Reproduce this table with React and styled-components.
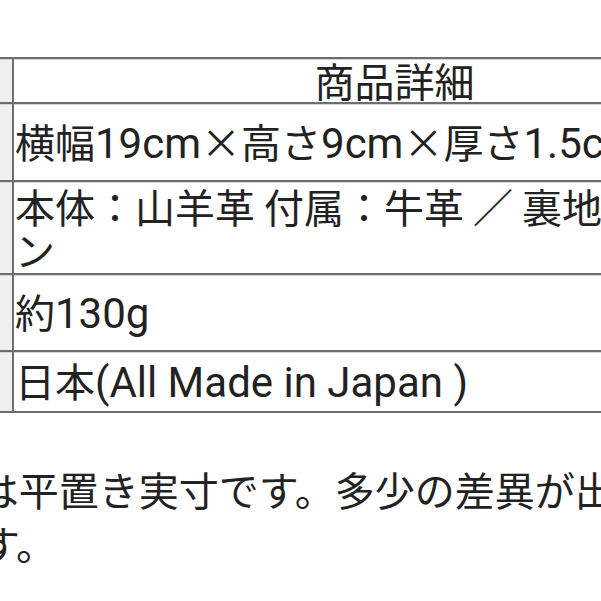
import React from 'react';
import styled, { createGlobalStyle } from 'styled-components';

const GlobalStyle = createGlobalStyle`
  html, body {
    margin: 0;
    padding: 0;
    background: #ffffff;
    overflow: hidden;
  }

  body {
    font-family: "Noto Sans CJK JP", sans-serif;
    color: #222222;
  }
`;

const Page = styled.div`
  padding-top: 57px;
  width: 601px;
`;

const SpecTable = styled.table`
  width: 778px;
  table-layout: fixed;
  border-collapse: separate;
  border-spacing: 0;
  font-size: 40px;
  line-height: 43px;
`;

const LabelCol = styled.col`
  width: 14px;
`;

const LabelCell = styled.th`
  background: #efefef;
  border-top: 2px solid #6e6e6e;
  border-right: 2px solid #6e6e6e;
  border-bottom: ${({ $last }) => ($last ? '2px solid #6e6e6e' : 'none')};
  box-shadow: inset 0 1px 0 #d4d4d4;
  padding: 0;
`;

const ValueCell = styled.td`
  height: ${({ $h }) => $h}px;
  box-sizing: border-box;
  border-top: 2px solid #6e6e6e;
  border-right: 2px solid #6e6e6e;
  border-bottom: ${({ $last }) => ($last ? '2px solid #6e6e6e' : 'none')};
  box-shadow: inset 0 1px 0 #d4d4d4;
  padding: 0 2px 0 1px;
  text-align: ${({ $align }) => $align || 'left'};
  vertical-align: middle;
  font-weight: 400;
`;

// Latin runs are set in Roboto, slightly larger than the CJK glyphs
const Latin = styled.span`
  font-family: Roboto, "Noto Sans CJK JP", sans-serif;
  font-size: 42px;
  line-height: 43px;
`;

const Note = styled.p`
  margin: 49px 0 0 -140px;
  width: 940px;
  font-size: 40px;
  line-height: 54px;
`;

const MixedText = ({ children }) =>
  children
    .split(/([A-Za-z0-9.()][A-Za-z0-9.() ]*)/)
    .map((part, i) => (i % 2 ? <Latin key={i}>{part}</Latin> : part));

const rows = [
  { value: '横幅19cm×高さ9cm×厚さ1.5cm', h: 78 },
  { value: '本体：山羊革 付属：牛革 ／ 裏地：ナイロン', h: 93 },
  { value: '約130g', h: 77 },
  { value: '日本(All Made in Japan )', h: 63 },
];

const App = () => (
  <>
    <GlobalStyle />
    <Page>
      <SpecTable>
        <colgroup>
          <LabelCol />
          <col />
        </colgroup>
        <tbody>
          <tr>
            <LabelCell />
            <ValueCell as="th" $h={45} $align="center">商品詳細</ValueCell>
          </tr>
          {rows.map((row, i) => (
            <tr key={row.value}>
              <LabelCell $last={i === rows.length - 1} />
              <ValueCell $h={row.h} $last={i === rows.length - 1}>
                <MixedText>{row.value}</MixedText>
              </ValueCell>
            </tr>
          ))}
        </tbody>
      </SpecTable>
      <Note>サイズは平置き実寸です。多少の差異が出る場合があります。</Note>
    </Page>
  </>
);

export default App;
